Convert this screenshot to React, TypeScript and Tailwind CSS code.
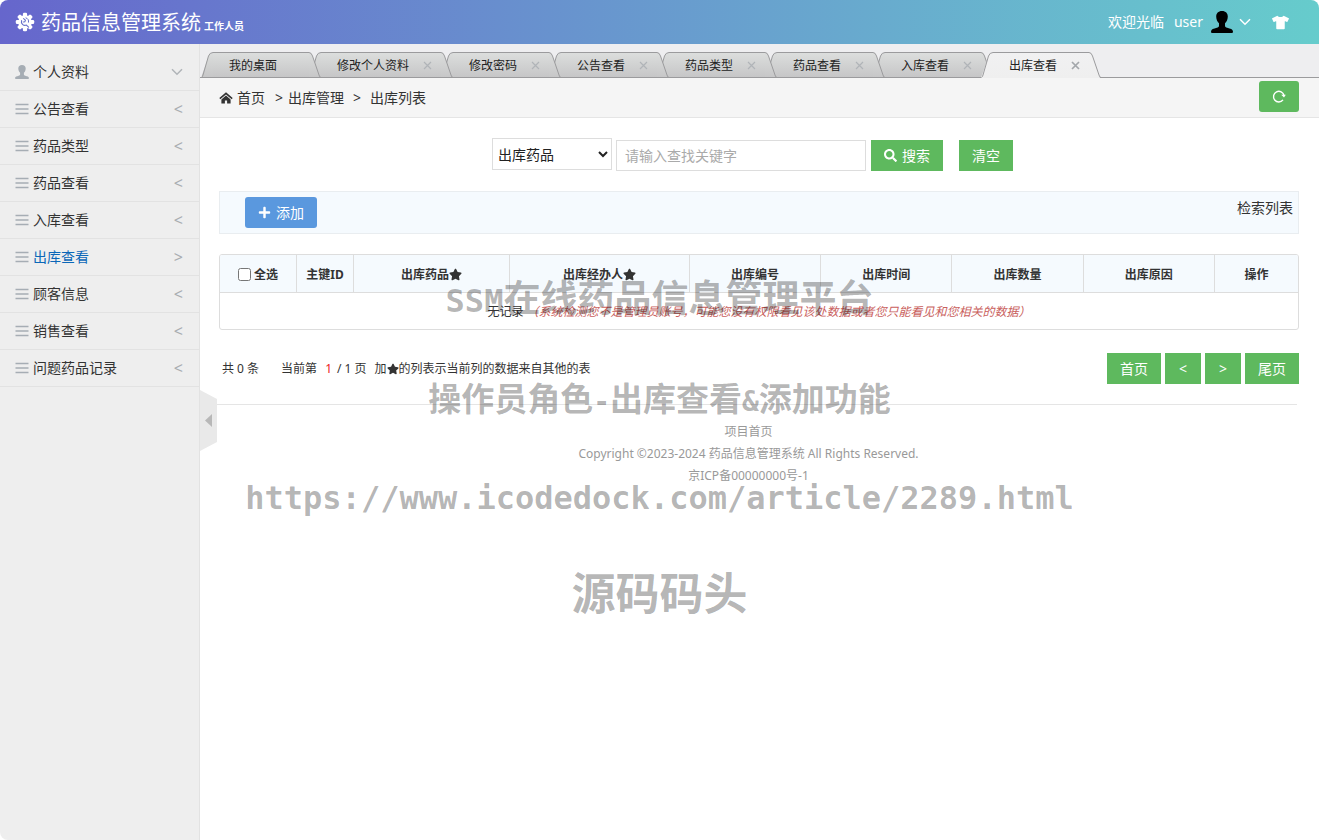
import { useState } from 'react'
import { FaPlus, FaSearch, FaStar, FaTshirt } from 'react-icons/fa'

const menu = [
  '公告查看',
  '药品类型',
  '药品查看',
  '入库查看',
  '出库查看',
  '顾客信息',
  '销售查看',
  '问题药品记录',
]

const tabs = [
  '我的桌面',
  '修改个人资料',
  '修改密码',
  '公告查看',
  '药品类型',
  '药品查看',
  '入库查看',
  '出库查看',
]

const columns = [
  { label: '主键ID', width: 'w-[57px]', star: false },
  { label: '出库药品', width: 'w-[14.5%]', star: true },
  { label: '出库经办人', width: 'w-[16.7%]', star: true },
  { label: '出库编号', width: 'w-[12.2%]', star: false },
  { label: '出库时间', width: 'w-[12.2%]', star: false },
  { label: '出库数量', width: 'w-[12.2%]', star: false },
  { label: '出库原因', width: 'w-[12.2%]', star: false },
  { label: '操作', width: 'w-[83px]', star: false },
]

const greenButton = 'h-[31px] min-w-9 bg-[#5eb95e] px-[13px] text-sm text-white'

function GearIcon() {
  return (
    <svg width="20" height="20" viewBox="0 0 20 20" aria-hidden="true">
      <g fill="#fff">
        <circle cx="10" cy="10" r="6.8" />
        {[0, 45, 90, 135, 180, 225, 270, 315].map((angle) => (
          <rect key={angle} x="7.9" y="0.8" width="4.2" height="4.6" rx="1.3" transform={`rotate(${angle} 10 10)`} />
        ))}
      </g>
      <path d="M6.600 8.600a3.600 3.600 0 0 0 4.800 4.500l2.200 2" fill="none" stroke="#6670ca" strokeWidth="1.1" strokeLinecap="round" />
      <path d="M8.600 6.600l1.800 1.600-.6 1.600-1.600.2" fill="none" stroke="#6670ca" strokeWidth="1.1" strokeLinecap="round" />
      <path d="M11 5.900a3.700 3.700 0 0 1 2.500 4.300" fill="none" stroke="#6670ca" strokeWidth="1" strokeLinecap="round" />
    </svg>
  )
}

function PersonIcon({ size, className }: { size: number; className: string }) {
  return (
    <svg width={size} height={size} viewBox="0 0 22 22" className={className} fill="currentColor" aria-hidden="true">
      <path d="M11 0C7.200 0 5.200 2.300 5.200 5.600c0 3 1.200 5.300 2.800 6.700v2.500c0 1.100-.8 1.600-2.200 2C2.600 17.700.2 18.200 0 20.400 0 21.500.6 22 1.400 22h19.200c.8 0 1.400-.5 1.400-1.600-.2-2.200-2.600-2.700-5.800-3.600-1.400-.4-2.200-.9-2.200-2v-2.500c1.600-1.400 2.800-3.700 2.800-6.700C16.800 2.300 14.800 0 11 0z" />
    </svg>
  )
}

function ChevronDown() {
  return (
    <svg width="12" height="8" viewBox="0 0 12 8" fill="none" stroke="currentColor" strokeWidth="1.5" aria-hidden="true">
      <path d="M1 1.200l5 5 5-5" />
    </svg>
  )
}

function ListIcon() {
  return (
    <svg width="14" height="12" viewBox="0 0 14 12" fill="none" stroke="#a6adb4" strokeWidth="1.500" aria-hidden="true">
      <path d="M.5 1.500h13M.5 6h13M.5 10.500h13" />
    </svg>
  )
}

function HomeIcon() {
  return (
    <svg width="14" height="12" viewBox="0 0 14 12" aria-hidden="true">
      <path d="M7 .2L.3 6l1 1.200L7 2.500l5.700 4.700 1-1.200z" fill="#333" />
      <path d="M7 3.600L2.400 7.400V11.500h3.500V8.600h2.200v2.900h3.500V7.400z" fill="#333" />
    </svg>
  )
}

function RefreshIcon() {
  return (
    <svg width="14" height="14" viewBox="0 0 14 14" fill="none" stroke="#fff" strokeWidth="1.400" aria-hidden="true">
      <path d="M11 10.900A5.300 5.300 0 1 1 12 6.500" />
      <path d="M9.200 5.800h4.600L12 8.600z" fill="#fff" stroke="none" />
    </svg>
  )
}

function Tab({ label, active, closable, order }: { label: string; active: boolean; closable: boolean; order: number }) {
  const top = active ? '#f1f1f2' : '#dcdedd'
  const bottom = active ? '#efefef' : '#c6c6c7'
  const id = `tab-fill-${order}`
  return (
    <li className="relative -mr-3 flex h-[26px]" style={{ zIndex: order }}>
      <svg width="12" height="26" viewBox="0 0 12 26" className="shrink-0" aria-hidden="true">
        <defs>
          <linearGradient id={id} x1="0" y1="0" x2="0" y2="26" gradientUnits="userSpaceOnUse">
            <stop offset="0" stopColor={top} />
            <stop offset="1" stopColor={bottom} />
          </linearGradient>
        </defs>
        <path d="M0 26L7.500 4Q8.800.5 12 .5V26z" fill={`url(#${id})`} />
        <path d="M.5 25.500Q1.500 25 2 23L7.500 4Q8.800.5 12 .5" fill="none" stroke="#9b9b9d" />
        {!active && <path d="M0 25.500h12" stroke="#9b9b9d" />}
      </svg>
      <div
        className={`flex flex-1 items-center border-t border-t-[#9b9b9d] bg-linear-to-b ${
          active ? 'from-[#f1f1f2] to-[#efefef]' : 'border-b border-b-[#9b9b9d] from-[#dcdedd] to-[#c6c6c7] pt-0.5'
        }`}
      >
        <button className="pr-8 pl-4 text-xs whitespace-nowrap text-[#222]">{label}</button>
      </div>
      {closable && (
        <button aria-label={`关闭${label}`} className="absolute top-[9px] right-[21px]">
          <svg
            width="9"
            height="9"
            viewBox="0 0 9 9"
            fill="none"
            stroke={active ? '#a3a7ab' : '#b0b4b8'}
            strokeWidth={active ? 1.7 : 1.2}
            aria-hidden="true"
          >
            <path d="M1 1l7 7M8 1l-7 7" />
          </svg>
        </button>
      )}
      <svg width="12" height="26" viewBox="0 0 12 26" className="shrink-0" aria-hidden="true">
        <path d="M0 .5Q2.400.5 3.500 4L11 26H0z" fill={`url(#${id})`} />
        <path d="M0 .5Q2.400.5 3.500 4L10 23Q10.700 25.500 12 25.500" fill="none" stroke="#9b9b9d" />
        {!active && <path d="M0 25.500h11" stroke="#9b9b9d" />}
      </svg>
    </li>
  )
}

function Header() {
  return (
    <header className="flex h-11 items-center justify-between rounded-t-lg bg-linear-to-r from-[#6666cc] to-[#66cccc] pr-[30px] pl-[15px] text-white">
      <a href="#" className="flex items-center">
        <GearIcon />
        <span className="mt-0.5 ml-[6px] text-xl">药品信息管理系统</span>
        <span className="mt-2 ml-[3px] text-[10px] font-bold">工作人员</span>
      </a>
      <div className="flex items-center text-sm">
        <span>欢迎光临</span>
        <button className="ml-[10px] flex items-center">
          user
          <PersonIcon size={22} className="mr-[6px] ml-2 text-black" />
          <ChevronDown />
        </button>
        <button aria-label="换肤" className="ml-[21px]">
          <FaTshirt size={17} />
        </button>
      </div>
    </header>
  )
}

function Sidebar() {
  return (
    <aside className="relative w-[200px] shrink-0 rounded-bl-lg border-r border-[#e2e2e2] bg-[#eeeeee] pt-[10px]">
      <nav>
        <a href="#" className="flex h-[37px] items-center border-b border-[#e2e2e2] pr-4 pl-[15px] text-sm text-[#333]">
          <PersonIcon size={14} className="mr-1 text-[#a6adb4]" />
          <span className="flex-1">个人资料</span>
          <span className="text-[#b0b4b8]">
            <ChevronDown />
          </span>
        </a>
        {menu.map((item) => {
          const active = item === '出库查看'
          return (
            <a
              key={item}
              href="#"
              className={`flex h-[37px] items-center border-b border-[#e2e2e2] pr-4 pl-[15px] text-sm ${
                active ? 'text-[#0a67b8]' : 'text-[#333]'
              }`}
            >
              <ListIcon />
              <span className="ml-1 flex-1">{item}</span>
              <span className="text-base text-[#a9adb1]">{active ? '>' : '<'}</span>
            </a>
          )
        })}
      </nav>
      <button aria-label="收起菜单" className="absolute top-[346px] left-full z-10 ml-px">
        <svg width="17" height="61" viewBox="0 0 17 61" aria-hidden="true">
          <path d="M0 0l17 9v43L0 61z" fill="#e9e9e9" />
          <path d="M12 24v13l-7-6.500z" fill="#b8b8b8" />
        </svg>
      </button>
    </aside>
  )
}

function SearchForm() {
  const [keyword, setKeyword] = useState('')
  return (
    <form className="flex items-start justify-center pr-[13px]" onSubmit={(e) => e.preventDefault()}>
      <select aria-label="查找字段" className="h-8 w-[120px] border border-[#dddddd] bg-white px-px text-sm text-[#222]">
        <option>出库药品</option>
        <option>出库经办人</option>
        <option>出库编号</option>
      </select>
      <input
        aria-label="查找关键字"
        placeholder="请输入查找关键字"
        value={keyword}
        onChange={(e) => setKeyword(e.target.value)}
        className="mt-0.5 ml-1 h-[31px] w-[250px] border border-[#dddddd] px-2 text-sm placeholder:text-[#aaaaaa]"
      />
      <button className={`${greenButton} mt-0.5 ml-[5px] flex items-center gap-[5px]`}>
        <FaSearch size={13} />
        搜索
      </button>
      <button type="button" className={`${greenButton} mt-0.5 ml-4`} onClick={() => setKeyword('')}>
        清空
      </button>
    </form>
  )
}

function RecordTable() {
  return (
    <div className="mt-5 overflow-hidden rounded-[3px] border border-[#dddddd]">
      <table className="w-full table-fixed border-separate border-spacing-0 text-xs text-[#333]">
        <thead>
          <tr className="h-[38px] bg-[#f5fafe]">
            <th className="w-[77px] border-r border-b border-[#dddddd] pt-0.5">
              <label className="flex items-center justify-center gap-[3px]">
                <input type="checkbox" className="size-[13px]" />
                全选
              </label>
            </th>
            {columns.map((col) => (
              <th key={col.label} className={`${col.width} border-r border-b border-[#dddddd] pt-0.5 last:border-r-0`}>
                <span className="inline-flex items-center">
                  {col.label}
                  {col.star && <FaStar size={13} />}
                </span>
              </th>
            ))}
          </tr>
        </thead>
        <tbody>
          <tr className="h-9">
            <td colSpan={9} className="pt-0.5 text-center">
              无记录 <em className="text-[#c9605c]">（系统检测您不是管理员账号，可能您没有权限看见该处数据或者您只能看见和您相关的数据）</em>
            </td>
          </tr>
        </tbody>
      </table>
    </div>
  )
}

function Pager() {
  return (
    <div className="mt-[23px] flex items-center justify-between">
      <p className="flex items-center pl-[3px] text-xs text-[#333]">
        <span>共 0 条</span>
        <span className="ml-[22px]">当前第</span>
        <span className="ml-2 text-[#ee2222]">1</span>
        <span className="ml-[5px]">/ 1 页</span>
        <span className="ml-2">加</span>
        <FaStar size={12} />
        <span>的列表示当前列的数据来自其他的表</span>
      </p>
      <div className="flex gap-1">
        <button className={greenButton}>首页</button>
        <button className={greenButton}>&lt;</button>
        <button className={greenButton}>&gt;</button>
        <button className={greenButton}>尾页</button>
      </div>
    </div>
  )
}

function Watermark() {
  return (
    <div className="pointer-events-none absolute inset-x-0 top-[274px] z-20 flex flex-col items-center font-['Noto_Sans_CJK_SC',sans-serif] font-bold whitespace-nowrap text-black/30">
      <p className="text-[37px] leading-[44px]">
        <span className="font-['DejaVu_Sans_Mono',monospace] text-[32px] leading-none">SSM</span>在线药品信息管理平台
      </p>
      <p className="mt-[57px] text-[33px] leading-[44px]">
        操作员角色<span className="font-['DejaVu_Sans_Mono',monospace] text-[28px] leading-none">-</span>出库查看
        <span className="font-['DejaVu_Sans_Mono',monospace] text-[28px] leading-none">&amp;</span>添加功能
      </p>
      <p className="mt-[57px] font-['DejaVu_Sans_Mono',monospace] text-[32px] leading-[44px]">
        https://www.icodedock.com/article/2289.html
      </p>
      <p className="mt-[46px] text-[44px] leading-[50px]">源码码头</p>
    </div>
  )
}

export default function App() {
  return (
    <div className="relative flex min-h-screen flex-col bg-white font-['Noto_Sans','Noto_Sans_CJK_SC',sans-serif] leading-5">
      <Header />
      <div className="flex flex-1">
        <Sidebar />
        <main className="min-w-0 flex-1">
          <div className="relative bg-[#eeeef0] pt-2">
            <div className="absolute inset-x-0 bottom-0 border-b border-[#9b9b9d]" />
            <ul className="flex pl-px">
              {tabs.map((label, i) => {
                const active = i === tabs.length - 1
                return (
                  <Tab key={label} label={label} active={active} closable={i > 0} order={active ? tabs.length + 1 : tabs.length - i} />
                )
              })}
            </ul>
          </div>

          <nav className="flex h-10 items-center border-b border-[#e5e5e5] bg-[#f5f5f5] pr-5 pl-[19px] text-sm text-[#333]">
            <HomeIcon />
            <a href="#" className="ml-1">首页</a>
            <span className="mr-[5px] ml-[10px]">&gt;</span>
            <span>出库管理</span>
            <span className="mx-[9px]">&gt;</span>
            <span>出库列表</span>
            <button aria-label="刷新" className="mb-[3px] ml-auto flex h-[31px] w-10 items-center justify-center rounded-[3px] bg-[#5eb95e]">
              <RefreshIcon />
            </button>
          </nav>

          <div className="pt-5 pr-5 pl-[19px]">
            <SearchForm />
            <div className="mt-5 flex items-start justify-between border border-[#e9edf0] bg-[#f5fafe] py-[5px] pr-[5px] pl-[25px]">
              <button className="flex h-[31px] items-center gap-[5px] rounded-[3px] bg-[#5a98de] px-[13px] text-sm text-white">
                <FaPlus size={13} />
                添加
              </button>
              <span className="mt-px text-sm text-[#333]">检索列表</span>
            </div>
            <RecordTable />
            <Pager />
          </div>

          <footer className="mt-5 mr-[22px] border-t border-[#e5e5e5] pt-4 text-center text-xs leading-[22px] text-[#999999]">
            <p>
              <a href="#">项目首页</a>
            </p>
            <p>Copyright ©2023-2024 药品信息管理系统 All Rights Reserved.</p>
            <p>京ICP备00000000号-1</p>
          </footer>
        </main>
      </div>
      <Watermark />
    </div>
  )
}
